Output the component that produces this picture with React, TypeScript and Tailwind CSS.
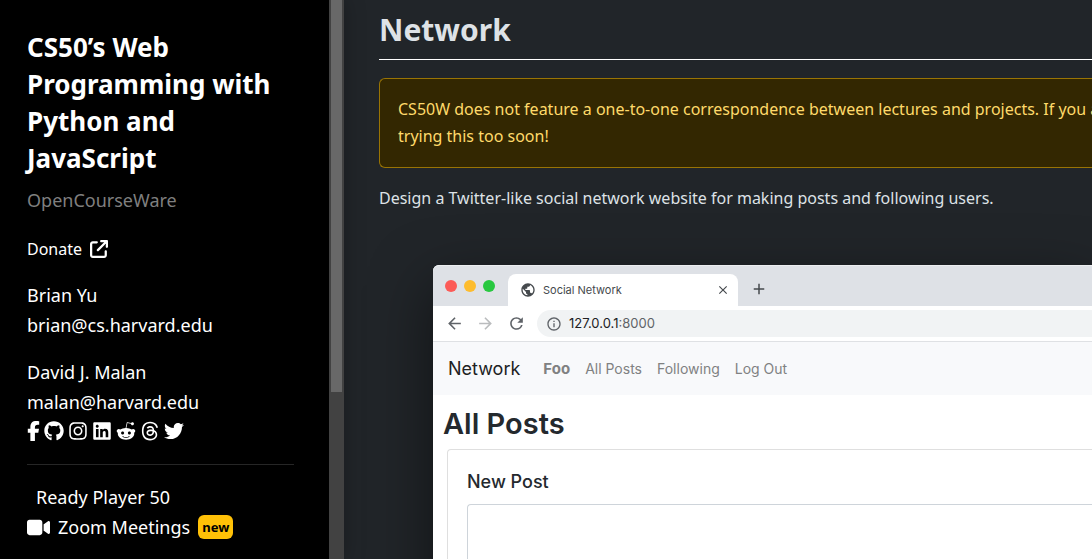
import { FaFacebookF, FaGithub, FaInstagram, FaLinkedin, FaThreads, FaTwitter, FaVideo, FaArrowUpRightFromSquare } from "react-icons/fa6";
import { FaRedditAlien } from "react-icons/fa";
import { MdPublic, MdArrowBack, MdArrowForward, MdRefresh, MdInfoOutline, MdClose, MdAdd } from "react-icons/md";

const socials = [
  { label: "Facebook", icon: <FaFacebookF className="h-5 w-[13px]" /> },
  { label: "GitHub", icon: <FaGithub className="size-5" /> },
  { label: "Instagram", icon: <FaInstagram className="size-5" /> },
  { label: "LinkedIn", icon: <FaLinkedin className="size-5" /> },
  { label: "Reddit", icon: <FaRedditAlien className="size-5" /> },
  { label: "Threads", icon: <FaThreads className="size-5" /> },
  { label: "Twitter", icon: <FaTwitter className="size-5" /> },
];

function Sidebar() {
  return (
    <aside className="z-10 flex w-[344px] shrink-0 bg-black shadow-[0_0_20px_rgba(0,0,0,0.25)]">
      <div className="flex-1 pb-7 pl-[27px] pr-[35px] pt-[29px] text-[18px] leading-[30px]">
        <h1 className="text-[26px] font-bold leading-[37px] text-white">
          <a href="#">
            CS50’s Web<br />Programming with<br />Python and<br />JavaScript
          </a>
        </h1>
        <p className="mt-2 text-[#7f7f7f]">OpenCourseWare</p>
        <a href="#" className="mt-5 flex h-7 items-center gap-2 text-[16px]">
          Donate <FaArrowUpRightFromSquare className="size-[18px]" />
        </a>
        <p className="mt-[17px]"><a href="#">Brian Yu</a><br /><a href="#">brian@cs.harvard.edu</a></p>
        <p className="mt-[17px]"><a href="#">David J. Malan</a><br /><a href="#">malan@harvard.edu</a></p>
        <div className="flex h-7 items-center gap-1">
          {socials.map((s) => (
            <a key={s.label} href="#" aria-label={s.label}>{s.icon}</a>
          ))}
        </div>
        <hr className="mb-[17px] mt-[19px] border-[#262626]" />
        <a href="#" className="block pl-[9px]">Ready Player 50</a>
        <div className="flex items-center gap-2">
          <FaVideo className="size-[23px]" />
          <a href="#">Zoom Meetings</a>
          <span className="rounded-md bg-[#ffc107] px-1 text-[13px] font-bold leading-6 text-black">new</span>
        </div>
      </div>
      <div className="w-[15px] shrink-0 bg-[#424242] px-0.5">
        <div className="h-[392px] bg-[#686868]" />
      </div>
    </aside>
  );
}

function BrowserWindow() {
  return (
    <section className="ml-[54px] mt-[53px] flex-1 rounded-tl-md bg-white font-['Inter',sans-serif] text-[#24292e] shadow-[0_20px_60px_rgba(0,0,0,0.5)]">
      <div className="flex h-[41px] items-end rounded-tl-md border-t border-[#eceef0] bg-[#dee1e6]">
        <div className="flex gap-[7px] self-center pl-3">
          <span className="size-3 rounded-full bg-[#fc5b57]" />
          <span className="size-3 rounded-full bg-[#fdbc2e]" />
          <span className="size-3 rounded-full bg-[#28c840]" />
        </div>
        <div className="ml-[13px] flex h-8 w-[230px] items-center rounded-t-lg bg-white pl-3 pr-2 text-[11px] text-[#45494d]">
          <MdPublic className="size-4" />
          <span className="ml-[7px] flex-1">Social Network</span>
          <button type="button" aria-label="Close tab"><MdClose className="size-[14px]" /></button>
        </div>
        <button type="button" aria-label="New tab" className="mb-2 ml-3 text-[#45494d]"><MdAdd className="size-[18px]" /></button>
      </div>
      <div className="flex h-9 items-center border-b border-[#dfe1e4] pl-3 text-[#5f6368]">
        <MdArrowBack className="size-[19px]" />
        <MdArrowForward className="ml-3 size-[19px] text-[#babcbe]" />
        <MdRefresh className="ml-3 size-[19px]" />
        <div className="ml-[11px] flex h-[27px] flex-1 items-center rounded-l-full bg-[#f1f3f4] pl-[9px] text-[13px]">
          <MdInfoOutline className="mr-[7px] size-4" />
          <span className="text-[#202124]">127.0.0.1</span>:8000
        </div>
      </div>
      <nav className="flex h-[53px] items-center gap-[15px] bg-[#f8f9fb] pl-[15px] text-[14px] text-[#808182]">
        <a href="#" className="mr-2 text-[18px] text-[#202122]">Network</a>
        <a href="#" className="text-[15px] font-bold">Foo</a>
        <a href="#">All Posts</a>
        <a href="#">Following</a>
        <a href="#">Log Out</a>
      </nav>
      <h2 className="pl-[10px] pt-[11px] text-[29px] font-semibold leading-9">All Posts</h2>
      <div className="ml-[14px] mt-[7px] rounded-tl border-l border-t border-[#dfdfdf] pl-[19px] pt-[18px]">
        <label htmlFor="post" className="block text-[18px] font-medium leading-7">New Post</label>
        <textarea id="post" className="mt-2 block h-40 w-full rounded-tl border-l border-t border-[#ced4da] bg-white" />
      </div>
    </section>
  );
}

export default function App() {
  return (
    <div className="flex h-screen overflow-hidden bg-[#212529] font-['Noto_Sans',sans-serif] text-white">
      <Sidebar />
      <main className="flex min-w-0 flex-1 flex-col overflow-hidden pl-[35px] text-[16px] leading-[27px] text-[#dee2e6]">
        <h1 className="border-b border-white pb-2 pt-2 text-[30px] font-bold leading-[43px]">Network</h1>
        <div className="mt-[18px] whitespace-nowrap rounded-l-md border border-r-0 border-[#997404] bg-[#332701] px-[18px] py-[17px] text-[#ffda6a]">
          CS50W does not feature a one-to-one correspondence between lectures and projects. If you are
          <br />
          trying this too soon!
        </div>
        <p className="mt-[17px]">Design a Twitter-like social network website for making posts and following users.</p>
        <BrowserWindow />
      </main>
    </div>
  );
}
